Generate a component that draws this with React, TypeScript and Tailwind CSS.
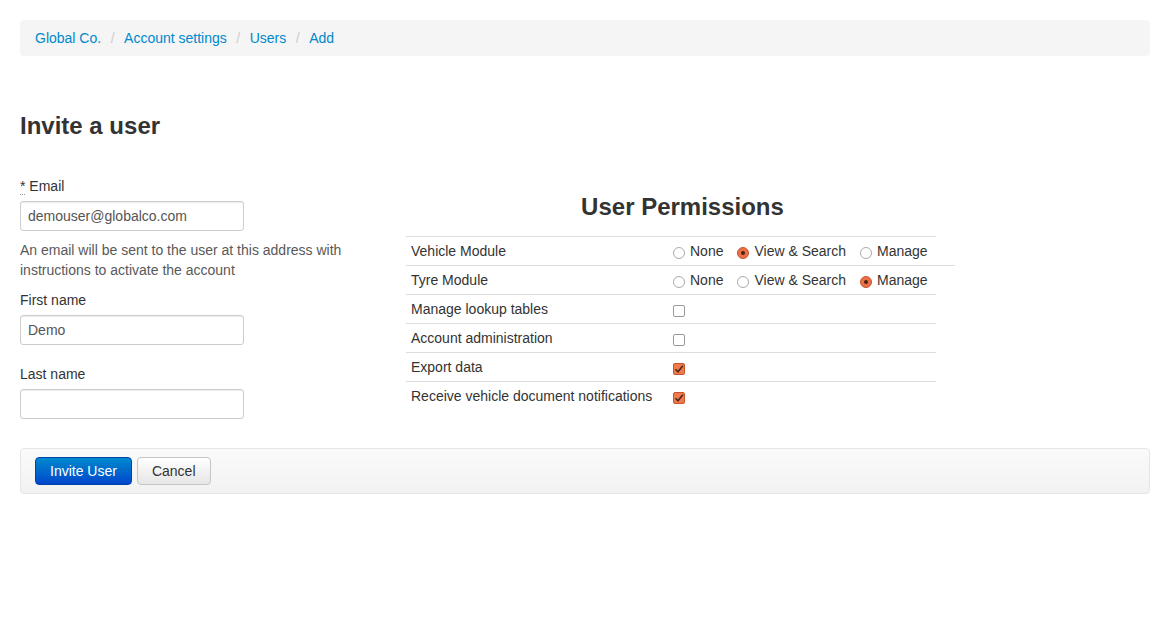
const Radio = ({ checked }: { checked?: boolean }) => (
    <span className={`mt-[6px] flex h-[12px] w-[12px] shrink-0 items-center justify-center rounded-full border ${checked ? "border-[#c9532c] bg-[#ec7047]" : "border-[#aaaaaa] bg-white"}`}>
        {checked && <span className="h-[4px] w-[4px] rounded-full bg-[#4a2214]" />}
    </span>
)

const Check = ({ checked }: { checked?: boolean }) => (
    <span className={`mt-[6px] flex h-[12px] w-[12px] items-center justify-center rounded-[2px] border ${checked ? "border-[#c9532c] bg-[#ef7a4c]" : "border-[#9a9a9a] bg-white"}`}>
        {checked && (
            <svg width="10" height="10" viewBox="0 0 10 10">
                <path d="M1.5 5.2 L4 7.8 L8.8 1.8" fill="none" stroke="#4a2a1c" strokeWidth="1.6" />
            </svg>
        )}
    </span>
)

const RadioGroup = ({ value }: { value: string }) => (
    <div className="flex items-start gap-[14px]">
        {["None", "View & Search", "Manage"].map((opt) => (
            <label key={opt} className="flex items-start gap-[5px]">
                <Radio checked={opt === value} />
                <span>{opt}</span>
            </label>
        ))}
    </div>
)

const Row = ({ label, children, wide }: { label: string; children: React.ReactNode; wide?: boolean }) => (
    <div className={`grid grid-cols-[267px_1fr] border-t border-[#dddddd] py-[4px] ${wide ? "w-[549px]" : "w-[530px]"}`}>
        <span className="px-[5px]">{label}</span>
        <div className="flex">{children}</div>
    </div>
)

const Field = ({ label, value, req }: { label: string; value?: string; req?: boolean }) => (
    <div className="flex flex-col gap-[5px]">
        <label>
            {req && <span className="border-b border-dotted border-[#999]">*</span>} {label}
        </label>
        <div className="flex h-[30px] w-[224px] items-center rounded-[3px] border border-[#cccccc] px-[7px] text-[#555] shadow-[inset_0_1px_1px_rgba(0,0,0,0.075)]">
            {value}
        </div>
    </div>
)

export default function App() {
    return (
        <div className="min-h-[621px] bg-white pl-[20px] pr-[18px] pt-[20px] text-[14px] leading-[20px] text-[#333] [font-family:'Liberation_Sans',Arial,sans-serif]">
            <div className="flex h-[36px] items-center rounded-[4px] bg-[#f5f5f5] px-[15px]">
                {["Global Co.", "Account settings", "Users", "Add"].map((c, i) => (
                    <span key={c} className="flex items-center">
                        {i > 0 && <span className="px-[9.5px] text-[#cccccc]">/</span>}
                        <a className="text-[#0088cc]">{c}</a>
                    </span>
                ))}
            </div>

            <h2 className="mt-[55px] text-[24px] leading-[30px] font-bold">Invite a user</h2>

            <div className="mt-[35px] flex gap-[20px]">
                <div className="flex w-[366px] flex-col">
                    <Field label="Email" value="demouser@globalco.com" req />
                    <p className="mt-[9px] text-[#595959]">An email will be sent to the user at this address with instructions to activate the account</p>
                    <div className="mt-[10px]">
                        <Field label="First name" value="Demo" />
                    </div>
                    <div className="mt-[19px]">
                        <Field label="Last name" />
                    </div>
                </div>

                <div className="flex w-[549px] flex-col pt-[16px]">
                    <h3 className="pl-[4px] text-center text-[24px] leading-[30px] font-bold">User Permissions</h3>
                    <div className="mt-[14px] flex flex-col">
                        <Row label="Vehicle Module"><RadioGroup value="View & Search" /></Row>
                        <Row label="Tyre Module" wide><RadioGroup value="Manage" /></Row>
                        <Row label="Manage lookup tables"><Check /></Row>
                        <Row label="Account administration"><Check /></Row>
                        <Row label="Export data"><Check checked /></Row>
                        <Row label="Receive vehicle document notifications"><Check checked /></Row>
                    </div>
                </div>
            </div>

            <div className="mt-[29px] flex gap-[5px] rounded-[4px] border border-[#e5e5e5] bg-gradient-to-b from-[#fafafa] to-[#f2f2f2] px-[14px] py-[8px]">
                <button className="h-[28px] rounded-[4px] border border-[#0044aa] bg-gradient-to-b from-[#0088cc] to-[#0044cc] px-[14px] text-white">Invite User</button>
                <button className="h-[28px] rounded-[4px] border border-[#c5c5c5] bg-gradient-to-b from-white to-[#e6e6e6] px-[14px] text-[#333]">Cancel</button>
            </div>
        </div>
    )
}
